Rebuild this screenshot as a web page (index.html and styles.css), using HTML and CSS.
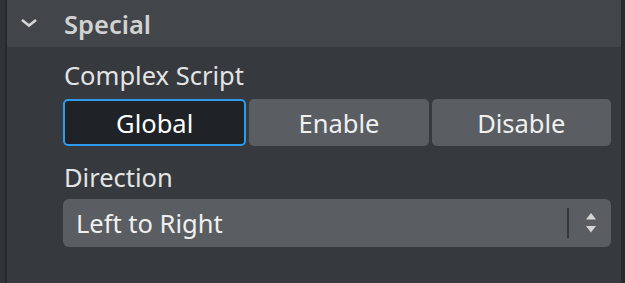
FILE: index.html
```html
<!DOCTYPE html>
<html lang="en">
<head>
    <meta charset="UTF-8">
    <meta name="viewport" content="width=device-width, initial-scale=1.0">
    <title>Special</title>
    <link rel="stylesheet" href="styles.css">
</head>
<body>

    <div class="panel">
        <div class="section-header">
            <svg class="chevron" width="18" height="10" viewBox="0 0 18 10">
                <polyline points="2,2 9,7.5 16,2" fill="none" stroke="#d6d6d6" stroke-width="2.6" stroke-linejoin="miter"/>
            </svg>
            <span class="section-title">Special</span>
        </div>

        <div class="section-body">
            <div class="field-label">Complex Script</div>
            <div class="segmented">
                <button class="seg active">Global</button>
                <button class="seg">Enable</button>
                <button class="seg">Disable</button>
            </div>

            <div class="field-label second">Direction</div>
            <div class="select">
                <span class="select-value">Left to Right</span>
                <span class="select-divider"></span>
                <svg class="select-arrows" width="12" height="22" viewBox="0 0 12 22">
                    <polygon points="6,1 11,7.5 1,7.5" fill="#d4d4d4"/>
                    <polygon points="1,14 11,14 6,20.5" fill="#d4d4d4"/>
                </svg>
            </div>
        </div>
    </div>

</body>
</html>
```

FILE: styles.css
```css
body {
    margin: 0;
    padding: 0;
    background-color: #27292d;
    font-family: "Noto Sans", "Open Sans", sans-serif;
    overflow: hidden;
}
.panel {
    width: 614px;
    height: 283px;
    margin-left: 7px;
    background: #36393e;
    position: relative;
}
.panel::before {
    content: "";
    position: absolute;
    left: -7px;
    top: 0;
    width: 5px;
    height: 100%;
    background: #303338;
}

/* Header */
.section-header {
    height: 47px;
    display: flex;
    align-items: center;
    background: #42454a;
}
.chevron {
    margin-left: 13px;
    margin-top: -1px;
}
.section-title {
    margin-left: 26px;
    font-size: 25.5px;
    font-weight: 600;
    line-height: 32px;
    color: #d2d2d2;
}

/* Body */
.section-body {
    padding: 12px 10px 0 56px;
}
.field-label {
    font-size: 25.5px;
    line-height: 32px;
    color: #e4e4e4;
    margin-left: 1px;
}
.field-label.second {
    margin-top: 15px;
}
.segmented {
    display: flex;
    gap: 3px;
    margin-top: 8px;
}
.seg {
    flex: 1;
    height: 47px;
    border: none;
    border-radius: 5px;
    background: #5a5e62;
    color: #f0f0f0;
    font-family: "Noto Sans", "Open Sans", sans-serif;
    font-size: 25.5px;
    line-height: 32px;
    padding: 0;
}
.seg.active {
    background: #1f2227;
    border: 2px solid #2f9bec;
    color: #ffffff;
}

/* Select */
.select {
    display: flex;
    align-items: center;
    height: 48px;
    margin-top: 6px;
    border-radius: 6px;
    background: #5a5e62;
}
.select-value {
    flex: 1;
    padding-left: 13px;
    font-size: 25.5px;
    line-height: 32px;
    color: #f0f0f0;
}
.select-divider {
    width: 2px;
    height: 30px;
    background: #34373b;
}
.select-arrows {
    margin: 0 14px 0 16px;
}
```
